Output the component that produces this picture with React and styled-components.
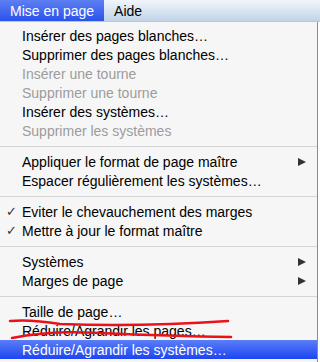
import styled, { createGlobalStyle } from "styled-components";

const GlobalStyle = createGlobalStyle`
  html, body {
    margin: 0;
    padding: 0;
    background: #ffffff;
  }
  body {
    font-family: "Liberation Sans", Arial, sans-serif;
    width: 320px;
    height: 362px;
    overflow: hidden;
  }
`;

const items = [
  { label: "Insérer des pages blanches…" },
  { label: "Supprimer des pages blanches…" },
  { label: "Insérer une tourne", disabled: true },
  { label: "Supprimer une tourne", disabled: true },
  { label: "Insérer des systèmes…" },
  { label: "Supprimer les systèmes", disabled: true },
  { separator: true },
  { label: "Appliquer le format de page maître", submenu: true },
  { label: "Espacer régulièrement les systèmes…" },
  { separator: true },
  { label: "Eviter le chevauchement des marges", checked: true },
  { label: "Mettre à jour le format maître", checked: true },
  { separator: true },
  { label: "Systèmes", submenu: true },
  { label: "Marges de page", submenu: true },
  { separator: true },
  { label: "Taille de page…" },
  { label: "Réduire/Agrandir les pages…", crossed: true },
  { label: "Réduire/Agrandir les systèmes…", selected: true },
];

export default function App() {
  return (
    <>
      <GlobalStyle />
      <Screen>
        <MenuBar>
          <MenuTitle active>Mise en page</MenuTitle>
          <MenuTitle>Aide</MenuTitle>
        </MenuBar>
        <MenuPanel>
          {items.map((item, i) =>
            item.separator ? (
              <Separator key={i} />
            ) : (
              <MenuItem key={i} disabled={item.disabled} selected={item.selected}>
                <Check>{item.checked ? "✓" : ""}</Check>
                <Label>{item.label}</Label>
                {item.submenu && <Arrow />}
                {item.crossed && <Scribble />}
              </MenuItem>
            )
          )}
        </MenuPanel>
      </Screen>
    </>
  );
}

// hand-drawn red strike-through over the "pages" item
function Scribble() {
  return (
    <ScribbleSvg width="240" height="24" viewBox="0 0 240 24">
      <path d="M10 2 Q 30 0 60 5 Q 140 8 228 2" />
      <path d="M12 19 Q 50 11 100 14 Q 170 17 231 18" />
    </ScribbleSvg>
  );
}

const Screen = styled.div`
  display: flex;
  flex-direction: column;
  width: 320px;
  height: 362px;
`;

const MenuBar = styled.div`
  display: flex;
  height: 22px;
  background: linear-gradient(#f1f5fb, #c2d4e8);
  border-bottom: 1px solid #b8c7d8;
  box-sizing: border-box;
`;

const MenuTitle = styled.div`
  display: flex;
  align-items: center;
  padding: 0 10px;
  font-size: 14px;
  color: ${(p) => (p.active ? "#ffffff" : "#000000")};
  background: ${(p) =>
    p.active ? "linear-gradient(#5d80f4, #2b52ea)" : "transparent"};
`;

const MenuPanel = styled.div`
  display: flex;
  flex-direction: column;
  width: 317px;
  flex: 1;
  padding-top: 4px;
  background: #f6f6f6;
  border-right: 1px solid #8c8c8c;
`;

const MenuItem = styled.div`
  position: relative;
  display: flex;
  align-items: center;
  height: 19px;
  flex-shrink: 0;
  font-size: 14px;
  color: ${(p) => (p.selected ? "#ffffff" : p.disabled ? "#9c9c9c" : "#000000")};
  background: ${(p) =>
    p.selected ? "linear-gradient(#5b7ef7, #1d45f1)" : "transparent"};
`;

const Check = styled.span`
  width: 22px;
  flex-shrink: 0;
  padding-left: 6px;
  box-sizing: border-box;
  font-family: "DejaVu Sans", sans-serif;
  font-size: 13px;
  color: #333333;
`;

const Label = styled.span`
  flex: 1;
  white-space: nowrap;
`;

const Arrow = styled.span`
  width: 0;
  height: 0;
  margin-right: 11px;
  border-top: 4px solid transparent;
  border-bottom: 4px solid transparent;
  border-left: 8px solid #333333;
`;

const Separator = styled.div`
  height: 12px;
  flex-shrink: 0;
  display: flex;
  align-items: center;

  &::after {
    content: "";
    flex: 1;
    height: 1px;
    background: #d5d5d5;
  }
`;

const ScribbleSvg = styled.svg`
  position: absolute;
  left: 0;
  top: -2px;
  overflow: visible;

  path {
    fill: none;
    stroke: #ea1119;
    stroke-width: 2.5;
    stroke-linecap: round;
  }
`;
